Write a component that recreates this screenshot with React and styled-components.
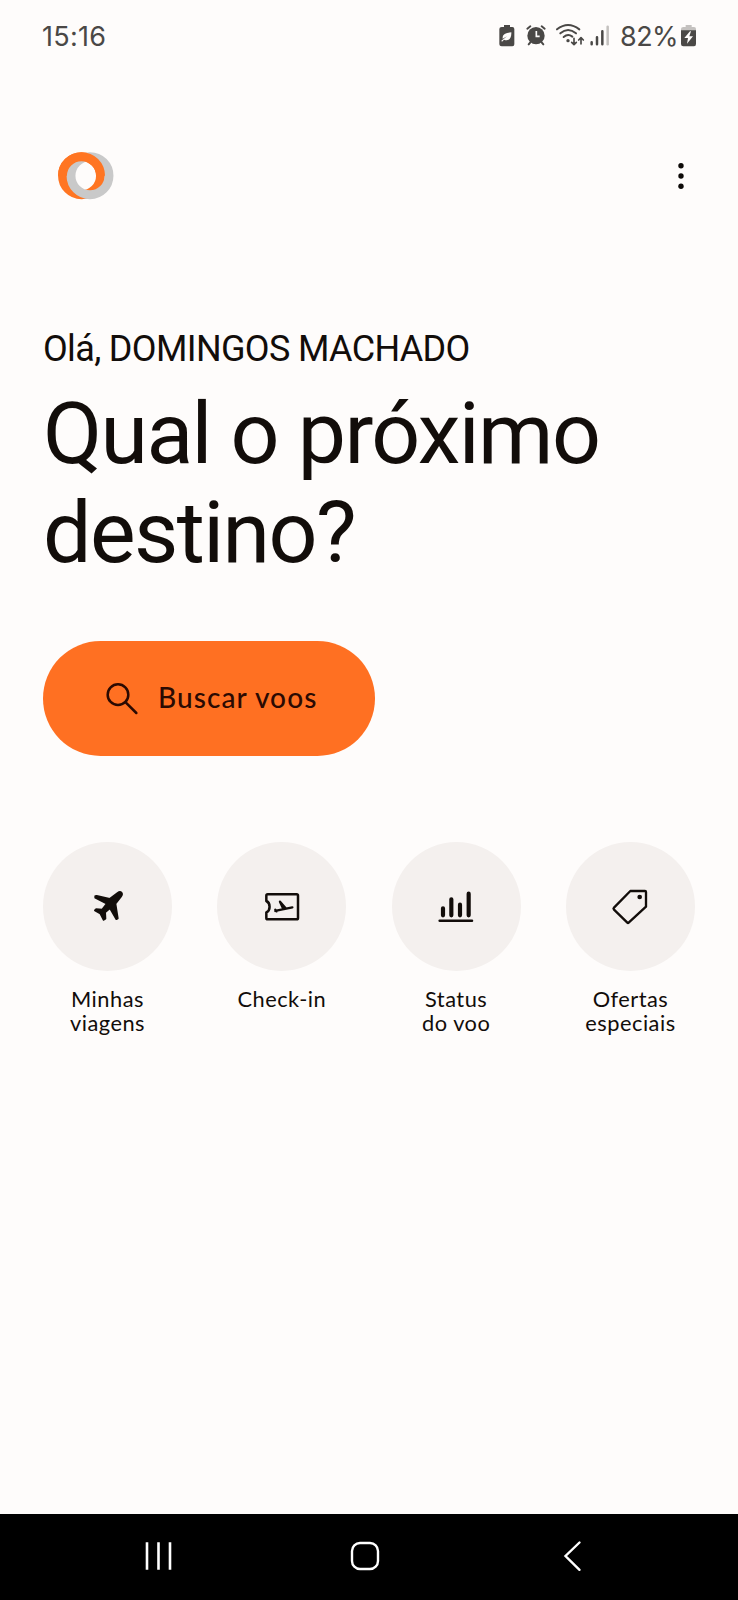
import React from "react";
import styled, { createGlobalStyle } from "styled-components";

const GlobalStyle = createGlobalStyle`
  * { box-sizing: border-box; }
  body { margin: 0; background: #fefcfb; }
`;

const Screen = styled.div`
  display: flex;
  flex-direction: column;
  width: 738px;
  height: 1600px;
  background: #fefcfb;
  color: #120d0a;
  font-family: Lato, "Open Sans", sans-serif;
`;

const StatusBar = styled.header`
  display: flex;
  justify-content: space-between;
  height: 72px;
  padding: 20px 41px 0 42px;
  color: #4a4846;
  font-family: Inter, sans-serif;
`;

const StatusText = styled.span`
  padding-top: 1px;
  font-size: 27px;
  font-weight: 400;
  line-height: 32px;
  letter-spacing: ${(p) => p.$tracking}px;
`;

const StatusIcons = styled.div`
  display: flex;
  align-items: flex-start;
`;

const Glyph = styled.svg`
  display: block;
  flex: none;
  overflow: visible;
  margin-top: ${(p) => p.$top || 0}px;
  margin-right: ${(p) => p.$gap || 0}px;
`;

const AppBar = styled.div`
  display: flex;
  justify-content: space-between;
  align-items: center;
  height: 208px;
  padding: 0 52px 0 57px;
`;

const MenuButton = styled.button`
  padding: 0;
  border: 0;
  background: none;
  color: #0d0a08;
`;

const Main = styled.main`
  flex: 1;
  padding: 48px 43px 0;
`;

const Greeting = styled.p`
  margin: 0;
  font: 400 36px/42px Roboto, sans-serif;
  letter-spacing: -0.65px;
  white-space: nowrap;
`;

const Title = styled.h1`
  margin: 13.6px 0 0;
  font: 400 86px/99.3px Roboto, sans-serif;
  letter-spacing: -1.6px;
  white-space: nowrap;
`;

const SearchButton = styled.button`
  display: flex;
  align-items: center;
  width: 331.5px;
  height: 114.5px;
  margin: 58.9px 0 0;
  padding: 0 0 3px 63px;
  border: 0;
  border-radius: 58px;
  background: #ff7022;
  color: #2b0a02;
  font: 500 28px/34px Lato, sans-serif;
  letter-spacing: 1.1px;
  white-space: nowrap;
`;

const Shortcuts = styled.nav`
  display: flex;
  justify-content: space-between;
  margin-top: 86.4px;
`;

const Shortcut = styled.div`
  display: flex;
  flex-direction: column;
  align-items: center;
  width: 129px;
`;

const Disc = styled.div`
  display: grid;
  place-items: center;
  width: 129px;
  height: 129px;
  border-radius: 50%;
  background: #f4f0ee;
`;

const Label = styled.span`
  margin-top: 16.5px;
  font-size: 21.8px;
  line-height: 24px;
  letter-spacing: 0.5px;
  text-align: center;
  white-space: pre-line;
`;

const NavBar = styled.footer`
  display: flex;
  justify-content: space-between;
  align-items: center;
  height: 86px;
  padding: 0 157px 2px 145px;
  background: #000;
`;

const stroke = { fill: "none", stroke: "currentColor", strokeLinecap: "round", strokeLinejoin: "round" };

const BatterySaver = () => (
  <Glyph width="16" height="22" viewBox="0 0 48 66" $top={4.5} $gap={11}>
    <path fill="currentColor" d="M15 0H33V6H40Q46 6 46 12V58Q46 64 40 64H8Q1 64 1 58V12Q1 6 8 6H15Z" />
    <path fill="#fefcfb" d="M37 22C38 42 28 50 15 44L9 50L7 47L24 34L11 41C10 26 22 24 37 22Z" />
  </Glyph>
);

const Alarm = () => (
  <Glyph width="20" height="21" viewBox="0 0 60 63" $top={5} $gap={10}>
    <circle cx="30" cy="32" r="26" fill="currentColor" />
    <g {...stroke} strokeWidth="6">
      <path d="M4 11L13 4M56 11L47 4M13 52L8 58M47 52L52 58" />
      <path stroke="#fefcfb" strokeWidth="5" d="M31 18V34H41" strokeLinecap="butt" strokeLinejoin="miter" />
    </g>
  </Glyph>
);

const Wifi = () => (
  <Glyph width="28" height="22" viewBox="0 0 84 66" $top={4} $gap={6}>
    <g {...stroke} strokeWidth="6">
      <path d="M3 16Q36 -10 70 16M13 28Q36 8 60 28M23 39Q36 28 49 38" />
      <path strokeWidth="5" d="M54 43V61M47 55L54 62L61 55M75 60V42M68 48L75 41L82 48" />
    </g>
    <circle cx="36" cy="50" r="5" fill="currentColor" />
  </Glyph>
);

const Signal = () => (
  <Glyph width="20" height="21" viewBox="0 0 60 63" $top={4.5} $gap={10}>
    <g {...stroke} strokeWidth="7.5">
      <path d="M5 52V58M21 37V58M37 19V58" />
      <path stroke="#c4c1bf" d="M53 5V58" />
    </g>
  </Glyph>
);

const BatteryCharging = () => (
  <Glyph width="16" height="22" viewBox="0 0 48 66" $top={4.5}>
    <path fill="#c4c1bf" d="M14 0H32V6H39Q45 6 45 12V18H0V12Q0 6 7 6H14Z" />
    <path fill="currentColor" d="M0 16H45V57Q45 64 39 64H7Q0 64 0 57Z" />
    <path fill="#fefcfb" d="M27 19L10 39H21L18 56L36 34H25L30 19Z" />
  </Glyph>
);

const Logo = () => (
  <Glyph width="58" height="50" viewBox="57 150.5 58 50">
    <g fill="none" strokeWidth="8.9">
      <circle cx="81.5" cy="175.2" r="19" stroke="#ff7522" />
      <circle cx="90" cy="175.2" r="19" stroke="#c9c9c9" />
      <path d="M62.5 175.2A19 19 0 0 1 100.5 175.2" stroke="#ff7522" />
    </g>
  </Glyph>
);

const Search = () => (
  <Glyph width="32" height="32" viewBox="0 0 96 96" $top={5} $gap={20}>
    <g {...stroke} strokeWidth="7.5">
      <circle cx="36" cy="35" r="31" />
      <path d="M59 58L91 90" />
    </g>
  </Glyph>
);

const shapes = {
  trips: (
    <path
      fill="currentColor" stroke="currentColor" strokeWidth="6" strokeLinejoin="round"
      d="M34 40L38 39L77 48L101 30Q108 25 112 29Q116 33 111 40L94 62L101 106L97 108L78 75L63 88L64 107L59 110L49 91L33 82L36 79L55 80L69 62L34 44Z"
    />
  ),
  checkin: (
    <g {...stroke} strokeWidth="7.5">
      <path d="M25 54V38Q25 34 29 34H116Q120 34 120 38V105Q120 109 116 109H29Q25 109 25 105V88C38 82 38 60 25 54Z" />
      <path strokeWidth="7" d="M52 84L59 82L103 73M66 56L83 76M66 56L76 78M52 80L56 85" />
    </g>
  ),
  status: (
    <g {...stroke}>
      <path strokeWidth="12.5" d="M33 76V97M58 49V97M84 65V97M110 32V97" />
      <path strokeWidth="7.5" d="M23 113H120" />
    </g>
  ),
  offers: (
    <g {...stroke} strokeWidth="7">
      <path d="M73 24H117Q120 24 120 27V71L68 119Q66 121 64 119L24 80Q21 77 24 74Z" />
      <circle cx="101" cy="42" r="7" fill="currentColor" stroke="none" />
    </g>
  ),
};

const items = [
  { shape: "trips", label: "Minhas\nviagens" },
  { shape: "checkin", label: "Check-in" },
  { shape: "status", label: "Status\ndo voo" },
  { shape: "offers", label: "Ofertas\nespeciais" },
];

export default function App() {
  return (
    <Screen>
      <GlobalStyle />
      <StatusBar>
        <StatusText $tracking={0.3}>15:16</StatusText>
        <StatusIcons>
          <BatterySaver />
          <Alarm />
          <Wifi />
          <Signal />
          <StatusText $tracking={-0.6}>82%</StatusText>
          <Glyph as="span" $gap={3} />
          <BatteryCharging />
        </StatusIcons>
      </StatusBar>
      <AppBar>
        <Logo />
        <MenuButton aria-label="Menu">
          <Glyph width="10" height="30" viewBox="0 0 10 30" fill="currentColor">
            <circle cx="5" cy="4.7" r="2.7" />
            <circle cx="5" cy="15" r="2.7" />
            <circle cx="5" cy="25.3" r="2.7" />
          </Glyph>
        </MenuButton>
      </AppBar>
      <Main>
        <Greeting>Olá, DOMINGOS MACHADO</Greeting>
        <Title>Qual o próximo<br />destino?</Title>
        <SearchButton>
          <Search />
          Buscar voos
        </SearchButton>
        <Shortcuts>
          {items.map(({ shape, label }) => (
            <Shortcut key={shape}>
              <Disc>
                <Glyph width="48" height="48" viewBox="0 0 144 144" $top={1}>{shapes[shape]}</Glyph>
              </Disc>
              <Label>{label}</Label>
            </Shortcut>
          ))}
        </Shortcuts>
      </Main>
      <NavBar>
        <Glyph width="28" height="32" viewBox="0 0 28 32">
          <path stroke="#fff" strokeWidth="2.6" d="M2 2.3V29.7M13.5 2.3V29.7M25 2.3V29.7" />
        </Glyph>
        <Glyph width="30" height="32" viewBox="0 0 30 32" $gap={6}>
          <rect x="2" y="3" width="26" height="26" rx="8" fill="none" stroke="#fff" strokeWidth="2.4" />
        </Glyph>
        <Glyph width="18" height="32" viewBox="0 0 18 32">
          <path fill="none" stroke="#fff" strokeWidth="2.4" strokeLinecap="round" d="M16.5 2.5L2.5 16L16.5 29.8" />
        </Glyph>
      </NavBar>
    </Screen>
  );
}
